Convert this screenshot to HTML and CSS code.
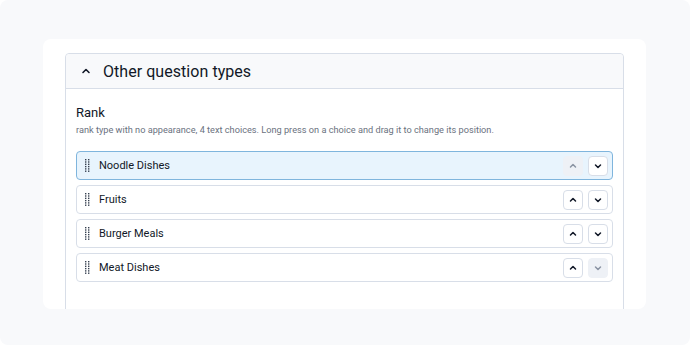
FILE: index.html
```html
<!DOCTYPE html>
<html lang="en">
	<head>
		<meta charset="UTF-8" />
		<meta name="viewport" content="width=device-width, initial-scale=1.0" />
		<title>Rank question</title>
		<link rel="stylesheet" href="styles.css">
	</head>
	<body>
		<div class="page">
			<div class="card">
				<div class="panel">
					<div class="panel-head">
						<svg class="caret" width="10" height="10" viewBox="0 0 10 10"><path d="M2 6.5 L5 3.5 L8 6.5" fill="none" stroke="#111827" stroke-width="1.6" stroke-linecap="round" stroke-linejoin="round"/></svg>
						<span class="panel-title">Other question types</span>
					</div>
					<div class="panel-body">
						<div class="q-title">Rank</div>
						<div class="q-desc">rank type with no appearance, 4 text choices. Long press on a choice and drag it to change its position.</div>
						<ul class="choices">
							<li class="choice active">
								<svg class="handle" width="5" height="13" viewBox="0 0 5 13"><g fill="#374151"><rect x="0" y="0" width="1.4" height="1.4"/><rect x="3" y="0" width="1.4" height="1.4"/><rect x="0" y="2.3" width="1.4" height="1.4"/><rect x="3" y="2.3" width="1.4" height="1.4"/><rect x="0" y="4.6" width="1.4" height="1.4"/><rect x="3" y="4.6" width="1.4" height="1.4"/><rect x="0" y="6.9" width="1.4" height="1.4"/><rect x="3" y="6.9" width="1.4" height="1.4"/><rect x="0" y="9.2" width="1.4" height="1.4"/><rect x="3" y="9.2" width="1.4" height="1.4"/><rect x="0" y="11.5" width="1.4" height="1.4"/><rect x="3" y="11.5" width="1.4" height="1.4"/></g></svg>
								<span class="label">Noodle Dishes</span>
								<span class="btn off"><svg width="10" height="10" viewBox="0 0 10 10"><path d="M2.5 6 L5 3.5 L7.5 6" /></svg></span>
								<span class="btn"><svg width="10" height="10" viewBox="0 0 10 10"><path d="M2.5 4 L5 6.5 L7.5 4" /></svg></span>
							</li>
							<li class="choice">
								<svg class="handle" width="5" height="13" viewBox="0 0 5 13"><g fill="#374151"><rect x="0" y="0" width="1.4" height="1.4"/><rect x="3" y="0" width="1.4" height="1.4"/><rect x="0" y="2.3" width="1.4" height="1.4"/><rect x="3" y="2.3" width="1.4" height="1.4"/><rect x="0" y="4.6" width="1.4" height="1.4"/><rect x="3" y="4.6" width="1.4" height="1.4"/><rect x="0" y="6.9" width="1.4" height="1.4"/><rect x="3" y="6.9" width="1.4" height="1.4"/><rect x="0" y="9.2" width="1.4" height="1.4"/><rect x="3" y="9.2" width="1.4" height="1.4"/><rect x="0" y="11.5" width="1.4" height="1.4"/><rect x="3" y="11.5" width="1.4" height="1.4"/></g></svg>
								<span class="label">Fruits</span>
								<span class="btn"><svg width="10" height="10" viewBox="0 0 10 10"><path d="M2.5 6 L5 3.5 L7.5 6" /></svg></span>
								<span class="btn"><svg width="10" height="10" viewBox="0 0 10 10"><path d="M2.5 4 L5 6.5 L7.5 4" /></svg></span>
							</li>
							<li class="choice">
								<svg class="handle" width="5" height="13" viewBox="0 0 5 13"><g fill="#374151"><rect x="0" y="0" width="1.4" height="1.4"/><rect x="3" y="0" width="1.4" height="1.4"/><rect x="0" y="2.3" width="1.4" height="1.4"/><rect x="3" y="2.3" width="1.4" height="1.4"/><rect x="0" y="4.6" width="1.4" height="1.4"/><rect x="3" y="4.6" width="1.4" height="1.4"/><rect x="0" y="6.9" width="1.4" height="1.4"/><rect x="3" y="6.9" width="1.4" height="1.4"/><rect x="0" y="9.2" width="1.4" height="1.4"/><rect x="3" y="9.2" width="1.4" height="1.4"/><rect x="0" y="11.5" width="1.4" height="1.4"/><rect x="3" y="11.5" width="1.4" height="1.4"/></g></svg>
								<span class="label">Burger Meals</span>
								<span class="btn"><svg width="10" height="10" viewBox="0 0 10 10"><path d="M2.5 6 L5 3.5 L7.5 6" /></svg></span>
								<span class="btn"><svg width="10" height="10" viewBox="0 0 10 10"><path d="M2.5 4 L5 6.5 L7.5 4" /></svg></span>
							</li>
							<li class="choice">
								<svg class="handle" width="5" height="13" viewBox="0 0 5 13"><g fill="#374151"><rect x="0" y="0" width="1.4" height="1.4"/><rect x="3" y="0" width="1.4" height="1.4"/><rect x="0" y="2.3" width="1.4" height="1.4"/><rect x="3" y="2.3" width="1.4" height="1.4"/><rect x="0" y="4.6" width="1.4" height="1.4"/><rect x="3" y="4.6" width="1.4" height="1.4"/><rect x="0" y="6.9" width="1.4" height="1.4"/><rect x="3" y="6.9" width="1.4" height="1.4"/><rect x="0" y="9.2" width="1.4" height="1.4"/><rect x="3" y="9.2" width="1.4" height="1.4"/><rect x="0" y="11.5" width="1.4" height="1.4"/><rect x="3" y="11.5" width="1.4" height="1.4"/></g></svg>
								<span class="label">Meat Dishes</span>
								<span class="btn"><svg width="10" height="10" viewBox="0 0 10 10"><path d="M2.5 6 L5 3.5 L7.5 6" /></svg></span>
								<span class="btn off"><svg width="10" height="10" viewBox="0 0 10 10"><path d="M2.5 4 L5 6.5 L7.5 4" /></svg></span>
							</li>
						</ul>
					</div>
				</div>
			</div>
		</div>
	</body>
</html>
```

FILE: styles.css
```css
html,
body,
ul {
	margin: 0;
	padding: 0;
	list-style: none;
}
html {
	background: #fff;
}
body {
	font-family: Roboto, "Liberation Sans", sans-serif;
	color: #111827;
}
.page {
	width: 690px;
	height: 345px;
	box-sizing: border-box;
	padding: 39px 44px 0 43px;
	background: #f8f9fb;
	border-radius: 8px;
	overflow: hidden;
}
.card {
	height: 270px;
	box-sizing: border-box;
	background: #fff;
	border-radius: 8px;
	padding: 14px 22px 0;
	overflow: hidden;
}
.panel {
	border: 1px solid #d8dee8;
	border-radius: 4px;
	height: 320px;
}
.panel-head {
	height: 34px;
	display: flex;
	align-items: center;
	background: #f8f9fb;
	border-bottom: 1px solid #d8dee8;
	border-radius: 4px 4px 0 0;
	padding-left: 15px;
}
.caret {
	margin-right: 12px;
}
.panel-title {
	font-size: 16px;
	letter-spacing: 0.05px;
}
.panel-body {
	padding: 16px 10px 0;
}
.q-title {
	font-size: 13px;
	line-height: 16px;
}
.q-desc {
	font-size: 9.2px;
	color: #6b7280;
	margin-top: 3px;
	line-height: 12px;
}
.choices {
	margin-top: 15px;
	display: flex;
	flex-direction: column;
	gap: 5px;
}
.choice {
	height: 27px;
	display: flex;
	align-items: center;
	gap: 5px;
	border: 1px solid #d8dee8;
	border-radius: 4px;
	padding: 0 4px 0 8px;
	background: #fff;
}
.choice.active {
	background: #e8f4fd;
	border-color: #7fb5dd;
}
.handle {
	margin-right: 4px;
}
.label {
	flex: 1;
	font-size: 11px;
	color: #111827;
}
.btn {
	width: 18px;
	height: 18px;
	display: flex;
	align-items: center;
	justify-content: center;
	border: 1px solid #d8dee8;
	border-radius: 4px;
	background: #fff;
}
.btn path {
	fill: none;
	stroke: #111827;
	stroke-width: 1.5;
	stroke-linecap: round;
	stroke-linejoin: round;
}
.btn.off {
	background: #eef1f6;
	border-color: #eef1f6;
}
.btn.off path {
	stroke: #8a93a3;
}
```
